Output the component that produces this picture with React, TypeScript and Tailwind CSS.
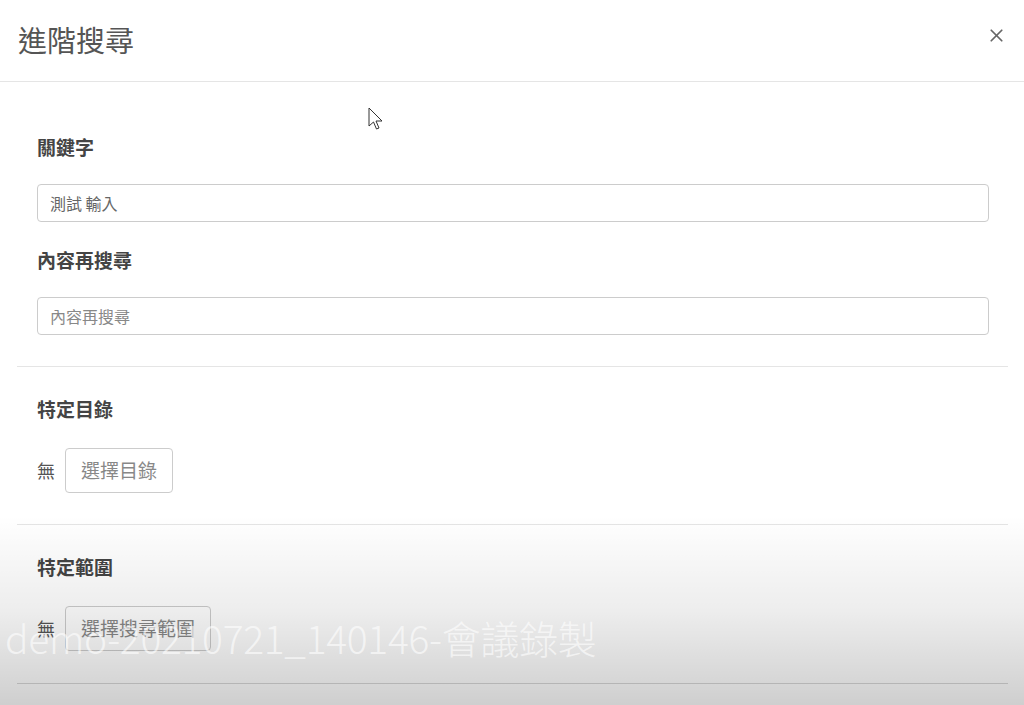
import { X } from "lucide-react";

const font = { fontFamily: '"Noto Sans CJK TC", "Noto Sans", sans-serif' };

const Label = ({ children, mb = "mb-[28px]" }: { children: string; mb?: string }) => (
  <h4 className={`text-[19px] leading-none font-bold text-[#444] ${mb}`}>{children}</h4>
);

const TextField = ({ value, placeholder }: { value?: string; placeholder: string }) => (
  <input
    className="w-full h-[38px] border border-[#ccc] rounded-[4px] px-3 text-[16px] text-[#666] placeholder:text-[#888] outline-none"
    defaultValue={value}
    placeholder={placeholder}
  />
);

const PickRow = ({ button }: { button: string }) => (
  <div className="flex items-center gap-[10px]">
    <span className="text-[18px] text-[#555]">無</span>
    <button className="h-[45px] px-[15px] border border-[#ccc] rounded-[4px] text-[19px] text-[#888] bg-white/60">
      {button}
    </button>
  </div>
);

export default function App() {
  return (
    <div className="relative w-[1024px] h-[705px] overflow-hidden bg-white" style={font}>
      {/* header */}
      <div className="h-[82px] border-b border-[#e5e5e5] flex items-center justify-between pl-[18px] pr-[17px]">
        <h1 className="text-[29px] text-[#555] leading-none -mt-[2px]">進階搜尋</h1>
        <X size={21} strokeWidth={2} className="text-[#666] -mt-[10px]" />
      </div>

      {/* body */}
      <div className="pl-[17px] pr-[16px]">
        <div className="pl-[20px] pr-[19px] pt-[55px] pb-[31px]">
          <Label>關鍵字</Label>
          <TextField value="測試 輸入" placeholder="關鍵字" />
          <div className="h-[28px]" />
          <Label>內容再搜尋</Label>
          <TextField placeholder="內容再搜尋" />
        </div>
        <div className="border-t border-[#e5e5e5]" />
        <div className="px-[20px] pt-[32px] pb-[31px]">
          <Label mb="mb-[30px]">特定目錄</Label>
          <PickRow button="選擇目錄" />
        </div>
        <div className="border-t border-[#e5e5e5]" />
        <div className="px-[20px] pt-[32px] pb-[32px]">
          <Label mb="mb-[30px]">特定範圍</Label>
          <PickRow button="選擇搜尋範圍" />
        </div>
        <div className="border-t border-[#d8d8d8]" />
      </div>

      {/* video overlay shading */}
      <div className="absolute left-0 right-0 bottom-0 h-[190px] bg-gradient-to-b from-transparent via-black/[0.07] to-black/[0.19] pointer-events-none" />

      {/* recording watermark */}
      <div className="absolute left-[5px] top-[618px] text-[39px] leading-none font-light text-white/60 tracking-[-0.3px] whitespace-nowrap pointer-events-none">
        demo-20210721_140146-會議錄製
      </div>

      {/* mouse cursor */}
      <svg className="absolute left-[368px] top-[107px]" width="16" height="26" viewBox="0 0 16 26">
        <path d="M1 1 L1 19 L5.5 15 L8.5 22 L11 21 L8 14 L14 14 Z" fill="white" stroke="#333" strokeWidth="1" strokeLinejoin="round" />
      </svg>
    </div>
  );
}
